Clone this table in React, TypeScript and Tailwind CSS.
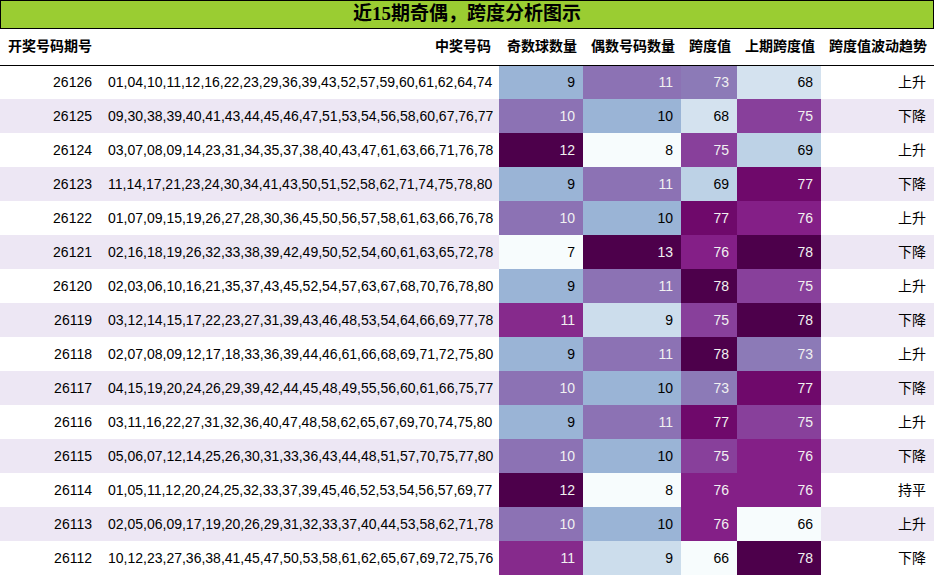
const ROWS: [string, string, number, number, number, number, string][] = [
  ["26126", "01,04,10,11,12,16,22,23,29,36,39,43,52,57,59,60,61,62,64,74", 9, 11, 73, 68, "上升"],
  ["26125", "09,30,38,39,40,41,43,44,45,46,47,51,53,54,56,58,60,67,76,77", 10, 10, 68, 75, "下降"],
  ["26124", "03,07,08,09,14,23,31,34,35,37,38,40,43,47,61,63,66,71,76,78", 12, 8, 75, 69, "上升"],
  ["26123", "11,14,17,21,23,24,30,34,41,43,50,51,52,58,62,71,74,75,78,80", 9, 11, 69, 77, "下降"],
  ["26122", "01,07,09,15,19,26,27,28,30,36,45,50,56,57,58,61,63,66,76,78", 10, 10, 77, 76, "上升"],
  ["26121", "02,16,18,19,26,32,33,38,39,42,49,50,52,54,60,61,63,65,72,78", 7, 13, 76, 78, "下降"],
  ["26120", "02,03,06,10,16,21,35,37,43,45,52,54,57,63,67,68,70,76,78,80", 9, 11, 78, 75, "上升"],
  ["26119", "03,12,14,15,17,22,23,27,31,39,43,46,48,53,54,64,66,69,77,78", 11, 9, 75, 78, "下降"],
  ["26118", "02,07,08,09,12,17,18,33,36,39,44,46,61,66,68,69,71,72,75,80", 9, 11, 78, 73, "上升"],
  ["26117", "04,15,19,20,24,26,29,39,42,44,45,48,49,55,56,60,61,66,75,77", 10, 10, 73, 77, "下降"],
  ["26116", "03,11,16,22,27,31,32,36,40,47,48,58,62,65,67,69,70,74,75,80", 9, 11, 77, 75, "上升"],
  ["26115", "05,06,07,12,14,25,26,30,31,33,36,43,44,48,51,57,70,75,77,80", 10, 10, 75, 76, "下降"],
  ["26114", "01,05,11,12,20,24,25,32,33,37,39,45,46,52,53,54,56,57,69,77", 12, 8, 76, 76, "持平"],
  ["26113", "02,05,06,09,17,19,20,26,29,31,32,33,37,40,44,53,58,62,71,78", 10, 10, 76, 66, "上升"],
  ["26112", "10,12,23,27,36,38,41,45,47,50,53,58,61,62,65,67,69,72,75,76", 11, 9, 66, 78, "下降"],
];

// BuPu gradient cells, written out so tailwind picks them up
const ODD: Record<number, string> = {
  7: "bg-[#f7fcfd] text-black",
  9: "bg-[#9ab4d6] text-black",
  10: "bg-[#8c72b4] text-[#f1f1f1]",
  11: "bg-[#862a8c] text-[#f1f1f1]",
  12: "bg-[#4d004b] text-[#f1f1f1]",
};
const EVEN: Record<number, string> = {
  8: "bg-[#f7fcfd] text-black",
  9: "bg-[#ccddec] text-black",
  10: "bg-[#9ab4d6] text-black",
  11: "bg-[#8c72b4] text-[#f1f1f1]",
  13: "bg-[#4d004b] text-[#f1f1f1]",
};
const SPAN: Record<number, string> = {
  66: "bg-[#f7fcfd] text-black",
  68: "bg-[#d4e2ef] text-black",
  69: "bg-[#bdd2e6] text-black",
  73: "bg-[#8c7ab7] text-[#f1f1f1]",
  75: "bg-[#88409b] text-[#f1f1f1]",
  76: "bg-[#841f87] text-[#f1f1f1]",
  77: "bg-[#6f096b] text-[#f1f1f1]",
  78: "bg-[#4d004b] text-[#f1f1f1]",
};

const HEAD = ["开奖号码期号", "中奖号码", "奇数球数量", "偶数号码数量", "跨度值", "上期跨度值", "跨度值波动趋势"];

export default function App() {
  return (
    <div className="w-[934px] h-[576px] bg-white overflow-hidden" style={{ fontFamily: '"Liberation Sans", "Noto Sans CJK SC", sans-serif' }}>
      <div
        className="h-[29px] border border-black bg-[#9acd32] flex items-center justify-center text-[19px] font-bold text-black"
        style={{ fontFamily: '"Liberation Serif", "Noto Sans CJK SC", serif' }}
      >
        近15期奇偶，跨度分析图示
      </div>
      <table className="w-full table-fixed border-collapse text-[14px]">
        <colgroup>
          <col className="w-[100px]" />
          <col className="w-[399px]" />
          <col className="w-[84px]" />
          <col className="w-[98px]" />
          <col className="w-[56px]" />
          <col className="w-[84px]" />
          <col />
        </colgroup>
        <thead>
          <tr className="h-[36px] border-b border-black">
            {HEAD.map((h) => (
              <th key={h} className="text-right font-bold px-[8px] whitespace-nowrap">{h}</th>
            ))}
          </tr>
        </thead>
        <tbody>
          {ROWS.map((r, i) => (
            <tr key={r[0]} className={`h-[34px] ${i % 2 ? "bg-[#ede7f4]" : "bg-white"}`}>
              <td className="text-right px-[8px]">{r[0]}</td>
              <td className="text-right px-[8px] whitespace-nowrap">{r[1]}</td>
              <td className={`text-right px-[8px] ${ODD[r[2]]}`}>{r[2]}</td>
              <td className={`text-right px-[8px] ${EVEN[r[3]]}`}>{r[3]}</td>
              <td className={`text-right px-[8px] ${SPAN[r[4]]}`}>{r[4]}</td>
              <td className={`text-right px-[8px] ${SPAN[r[5]]}`}>{r[5]}</td>
              <td className="text-right px-[8px]">{r[6]}</td>
            </tr>
          ))}
        </tbody>
      </table>
    </div>
  );
}
